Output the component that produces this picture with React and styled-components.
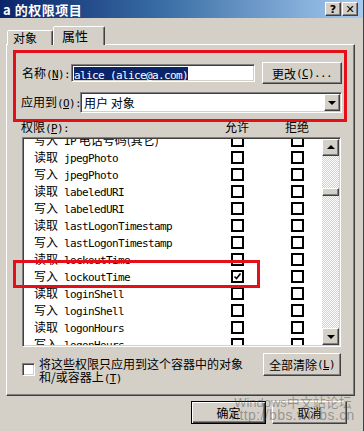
import styled, { createGlobalStyle, css } from "styled-components"

const FACE = '#d4d0c8'
const SHADOW = '#808080'
const DARK = '#404040'
const MARK = '#e3101a'

const GlobalStyle = createGlobalStyle`
  html, body {
    margin: 0;
    padding: 0;
    background: ${FACE};
  }
  body {
    font-family: "Noto Sans CJK SC", "Liberation Sans", sans-serif;
    font-size: 12px;
    color: #000;
  }
`

const raised = css`
  border: 1px solid;
  border-color: #fff ${DARK} ${DARK} #fff;
  box-shadow: inset -1px -1px ${SHADOW}, inset 1px 1px ${FACE};
  background: ${FACE};
`
const sunken = css`
  border: 1px solid;
  border-color: ${SHADOW} #fff #fff ${SHADOW};
  box-shadow: inset 1px 1px ${DARK}, inset -1px -1px ${FACE};
`

const Window = styled.div`
  position: relative;
  width: 364px;
  height: 431px;
  box-sizing: border-box;
  background: ${FACE};
  border-right: 1px solid ${DARK};
  overflow: hidden;
  line-height: 13px;
`

const TitleBar = styled.div`
  height: 18px;
  display: flex;
  align-items: center;
  padding: 0 5px 0 3px;
  background: linear-gradient(to right, #0a246a, #3a6ea5 45%, #a6caf0);
`
const Title = styled.div`
  color: #fff;
  font-weight: bold;
  font-size: 13px;
  letter-spacing: 0.5px;
`
const TitleButtons = styled.div`
  margin-left: auto;
  display: flex;
  gap: 1px;
`
const TitleButton = styled.div`
  ${raised};
  width: 16px;
  height: 14px;
  box-sizing: border-box;
  display: flex;
  align-items: center;
  justify-content: center;
  font-family: "DejaVu Sans", sans-serif;
  font-weight: bold;
  font-size: 11px;
  line-height: 1;
`

const Content = styled.div`
  padding: 8px 8px 0 6px;
`
const TabStrip = styled.div`
  display: flex;
  align-items: flex-end;
  height: 19px;
  padding-left: 1px;
  margin-bottom: -1px;
  position: relative;
  z-index: 1;
`
const Tab = styled.div`
  box-sizing: border-box;
  height: ${p => (p.$active ? 19 : 15)}px;
  width: ${p => (p.$active ? 52 : 46)}px;
  padding: ${p => (p.$active ? '2px 0 0 8px' : '0 0 0 5px')};
  background: ${FACE};
  border: 1px solid;
  border-bottom: none;
  border-color: #fff ${DARK} transparent #fff;
  box-shadow: inset -1px 0 ${SHADOW};
  border-radius: 2px 2px 0 0;
  font-size: ${p => (p.$active ? 13 : 12)}px;
`

const Panel = styled.div`
  position: relative;
  height: 352px;
  box-sizing: border-box;
  border: 1px solid;
  border-color: #fff ${DARK} ${DARK} #fff;
  box-shadow: inset -1px -1px ${SHADOW};
  padding: 5px 6px 0 6px;
`

const RedBox = styled.div`
  width: 334px;
  box-sizing: border-box;
  border: 3px solid ${MARK};
  padding: 9px 2px 6px 6px;
`
const FieldRow = styled.div`
  display: flex;
  align-items: center;
  height: ${p => p.$h}px;
  margin-top: ${p => p.$gap || 0}px;
`
const Label = styled.div`
  width: ${p => p.$w}px;
  flex: none;
  white-space: nowrap;
  margin-left: ${p => p.$shift || 0}px;
`
const Latin = styled.span`
  font-family: "DejaVu Sans Mono", "Liberation Mono", monospace;
  font-size: 11px;
  letter-spacing: -0.62px;
`
const Key = styled.span`
  text-decoration: underline;
`

const TextBox = styled.div`
  ${sunken};
  width: 186px;
  height: 18px;
  box-sizing: border-box;
  background: #fff;
  padding: 2px 0 0 2px;
  white-space: nowrap;
  overflow: hidden;
`
const Selected = styled.span`
  background: #0a246a;
  color: #fff;
  display: inline-block;
  height: 13px;
  line-height: 13px;
`

const Button = styled.div`
  ${raised};
  width: ${p => p.$w}px;
  height: ${p => p.$h || 23}px;
  box-sizing: border-box;
  display: flex;
  align-items: center;
  justify-content: center;
  flex: none;
  margin-left: ${p => p.$ml || 0}px;
  margin-right: ${p => p.$mr || 0}px;
  white-space: nowrap;
  ${p => p.$default && css`
    border-color: #000;
    box-shadow: inset 1px 1px #fff, inset -1px -1px ${DARK}, inset -2px -2px ${SHADOW};
  `}
`

const Combo = styled.div`
  ${sunken};
  width: 262px;
  height: 21px;
  box-sizing: border-box;
  background: #fff;
  display: flex;
  align-items: center;
  padding: 0 1px 0 3px;
`
const ComboText = styled.div`
  flex: 1;
`

const ArrowButton = styled.div`
  ${raised};
  width: ${p => p.$w || 17}px;
  height: 17px;
  box-sizing: border-box;
  flex: none;
  display: flex;
  align-items: center;
  justify-content: center;
  &::after {
    content: '';
    width: 0;
    height: 0;
    border-left: 4px solid transparent;
    border-right: 4px solid transparent;
    ${p => (p.$up
      ? css`border-bottom: 4px solid #000; margin-top: -1px;`
      : css`border-top: 4px solid #000; margin-top: 1px;`)}
  }
`

const HeaderRow = styled.div`
  display: grid;
  grid-template-columns: 204px 60px auto;
  height: 17px;
  margin: -2px 0 0 8px;
`

const ListBox = styled.div`
  ${sunken};
  width: 319px;
  height: 210px;
  box-sizing: border-box;
  margin-left: 9px;
  background: #fff;
  display: flex;
  padding: 1px;
`
const Rows = styled.div`
  flex: 1;
  overflow: hidden;
`
const RowsInner = styled.div`
  margin-top: -7px;
`
const Row = styled.div`
  display: grid;
  grid-template-columns: 207px 60px 31px;
  height: 17px;
  align-items: center;
`
const RowName = styled.div`
  padding-left: 10px;
  white-space: nowrap;
`
const Box = styled.div`
  width: 13px;
  height: 13px;
  box-sizing: border-box;
  border: 2px solid #000;
  background: #fff;
  display: flex;
  align-items: center;
  justify-content: center;
`

const ScrollBar = styled.div`
  width: 17px;
  display: flex;
  flex-direction: column;
`
const Track = styled.div`
  flex: 1;
  background-color: #fff;
  background-image: repeating-conic-gradient(${FACE} 0 25%, #fff 0 50%);
  background-size: 2px 2px;
`
const Thumb = styled.div`
  ${raised};
  height: 8px;
  box-sizing: border-box;
  margin-top: 32px;
`

const LineMark = styled.div`
  position: absolute;
  left: 6px;
  top: 215px;
  width: 247px;
  height: 28px;
  box-sizing: border-box;
  border: 3px solid ${MARK};
  pointer-events: none;
`

const BottomRow = styled.div`
  display: flex;
  align-items: flex-start;
  margin-top: 6px;
  padding-left: 9px;
`
const CheckWrap = styled.div`
  display: flex;
  align-items: flex-start;
  flex: 1;
`
const PlainCheck = styled.div`
  ${sunken};
  width: 13px;
  height: 13px;
  box-sizing: border-box;
  background: #fff;
  margin-top: 10px;
  flex: none;
`
const CheckText = styled.div`
  margin: 4px 0 0 4px;
  line-height: 13px;
`

const Footer = styled.div`
  display: flex;
  justify-content: flex-end;
  gap: 6px;
  padding: 5px 8px 0 0;
`

const Watermark = styled.div`
  position: absolute;
  left: 226px;
  top: 396px;
  width: 134px;
  text-align: center;
  color: rgba(70, 70, 70, 0.45);
  font-family: "Liberation Sans", "Noto Sans CJK SC", sans-serif;
  font-size: 13px;
  line-height: 13px;
  pointer-events: none;
  & div + div {
    font-size: 14px;
    letter-spacing: 0.4px;
  }
`

function Check({ checked }) {
  return (
    <Box>
      {checked && (
        <svg width="9" height="9" viewBox="0 0 9 9">
          <path d="M1.5 4.5 L3.5 6.5 L7.5 1.5" fill="none" stroke="#000" strokeWidth="1.6" />
        </svg>
      )}
    </Box>
  )
}

const rows = [
  { op: '写入', attr: 'IP', tail: ' 电话号码(其它)' },
  { op: '读取', attr: 'jpegPhoto' },
  { op: '写入', attr: 'jpegPhoto' },
  { op: '读取', attr: 'labeledURI' },
  { op: '写入', attr: 'labeledURI' },
  { op: '读取', attr: 'lastLogonTimestamp' },
  { op: '写入', attr: 'lastLogonTimestamp' },
  { op: '读取', attr: 'lockoutTime' },
  { op: '写入', attr: 'lockoutTime', allow: true },
  { op: '读取', attr: 'loginShell' },
  { op: '写入', attr: 'loginShell' },
  { op: '读取', attr: 'logonHours' },
  { op: '写入', attr: 'logonHours' },
]

export default function App() {
  return (
    <>
      <GlobalStyle />
      <Window>
        <TitleBar>
          <Title>a 的权限项目</Title>
          <TitleButtons>
            <TitleButton>?</TitleButton>
            <TitleButton>✕</TitleButton>
          </TitleButtons>
        </TitleBar>

        <Content>
          <TabStrip>
            <Tab>对象</Tab>
            <Tab $active>属性</Tab>
          </TabStrip>

          <Panel>
            <RedBox>
              <FieldRow $h={22}>
                <Label $w={49}>名称<Latin>(<Key>N</Key>):</Latin></Label>
                <TextBox>
                  <Selected><Latin>alice (alice@a.com)</Latin></Selected>
                </TextBox>
                <Button $w={80} $h={22} $ml={7}>更改<Latin>(<Key>C</Key>)...</Latin></Button>
              </FieldRow>
              <FieldRow $h={21} $gap={8}>
                <Label $w={59} $shift={-1}>应用到<Latin>(<Key>O</Key>):</Latin></Label>
                <Combo>
                  <ComboText>用户 对象</ComboText>
                  <ArrowButton $w={16} />
                </Combo>
              </FieldRow>
            </RedBox>

            <HeaderRow>
              <div>权限<Latin>(<Key>P</Key>):</Latin></div>
              <div>允许</div>
              <div>拒绝</div>
            </HeaderRow>

            <ListBox>
              <Rows>
                <RowsInner>
                  {rows.map((r, i) => (
                    <Row key={i}>
                      <RowName>
                        {r.op}<Latin> {r.attr}</Latin>{r.tail}
                      </RowName>
                      <Check checked={r.allow} />
                      <Check />
                    </Row>
                  ))}
                </RowsInner>
              </Rows>
              <ScrollBar>
                <ArrowButton $up />
                <Track>
                  <Thumb />
                </Track>
                <ArrowButton />
              </ScrollBar>
            </ListBox>

            <LineMark />

            <BottomRow>
              <CheckWrap>
                <PlainCheck />
                <CheckText>
                  将这些权限只应用到这个容器中的对象<br />
                  和/或容器上<Latin>(<Key>T</Key>)</Latin>
                </CheckText>
              </CheckWrap>
              <Button $w={78} $mr={7}>全部清除<Latin>(<Key>L</Key>)</Latin></Button>
            </BottomRow>
          </Panel>

          <Footer>
            <Button $w={75} $default>确定</Button>
            <Button $w={75}>取消</Button>
          </Footer>
        </Content>

        <Watermark>
          <div>Windows中文站论坛</div>
          <div>http://bbs.winbs.cn</div>
        </Watermark>
      </Window>
    </>
  )
}
